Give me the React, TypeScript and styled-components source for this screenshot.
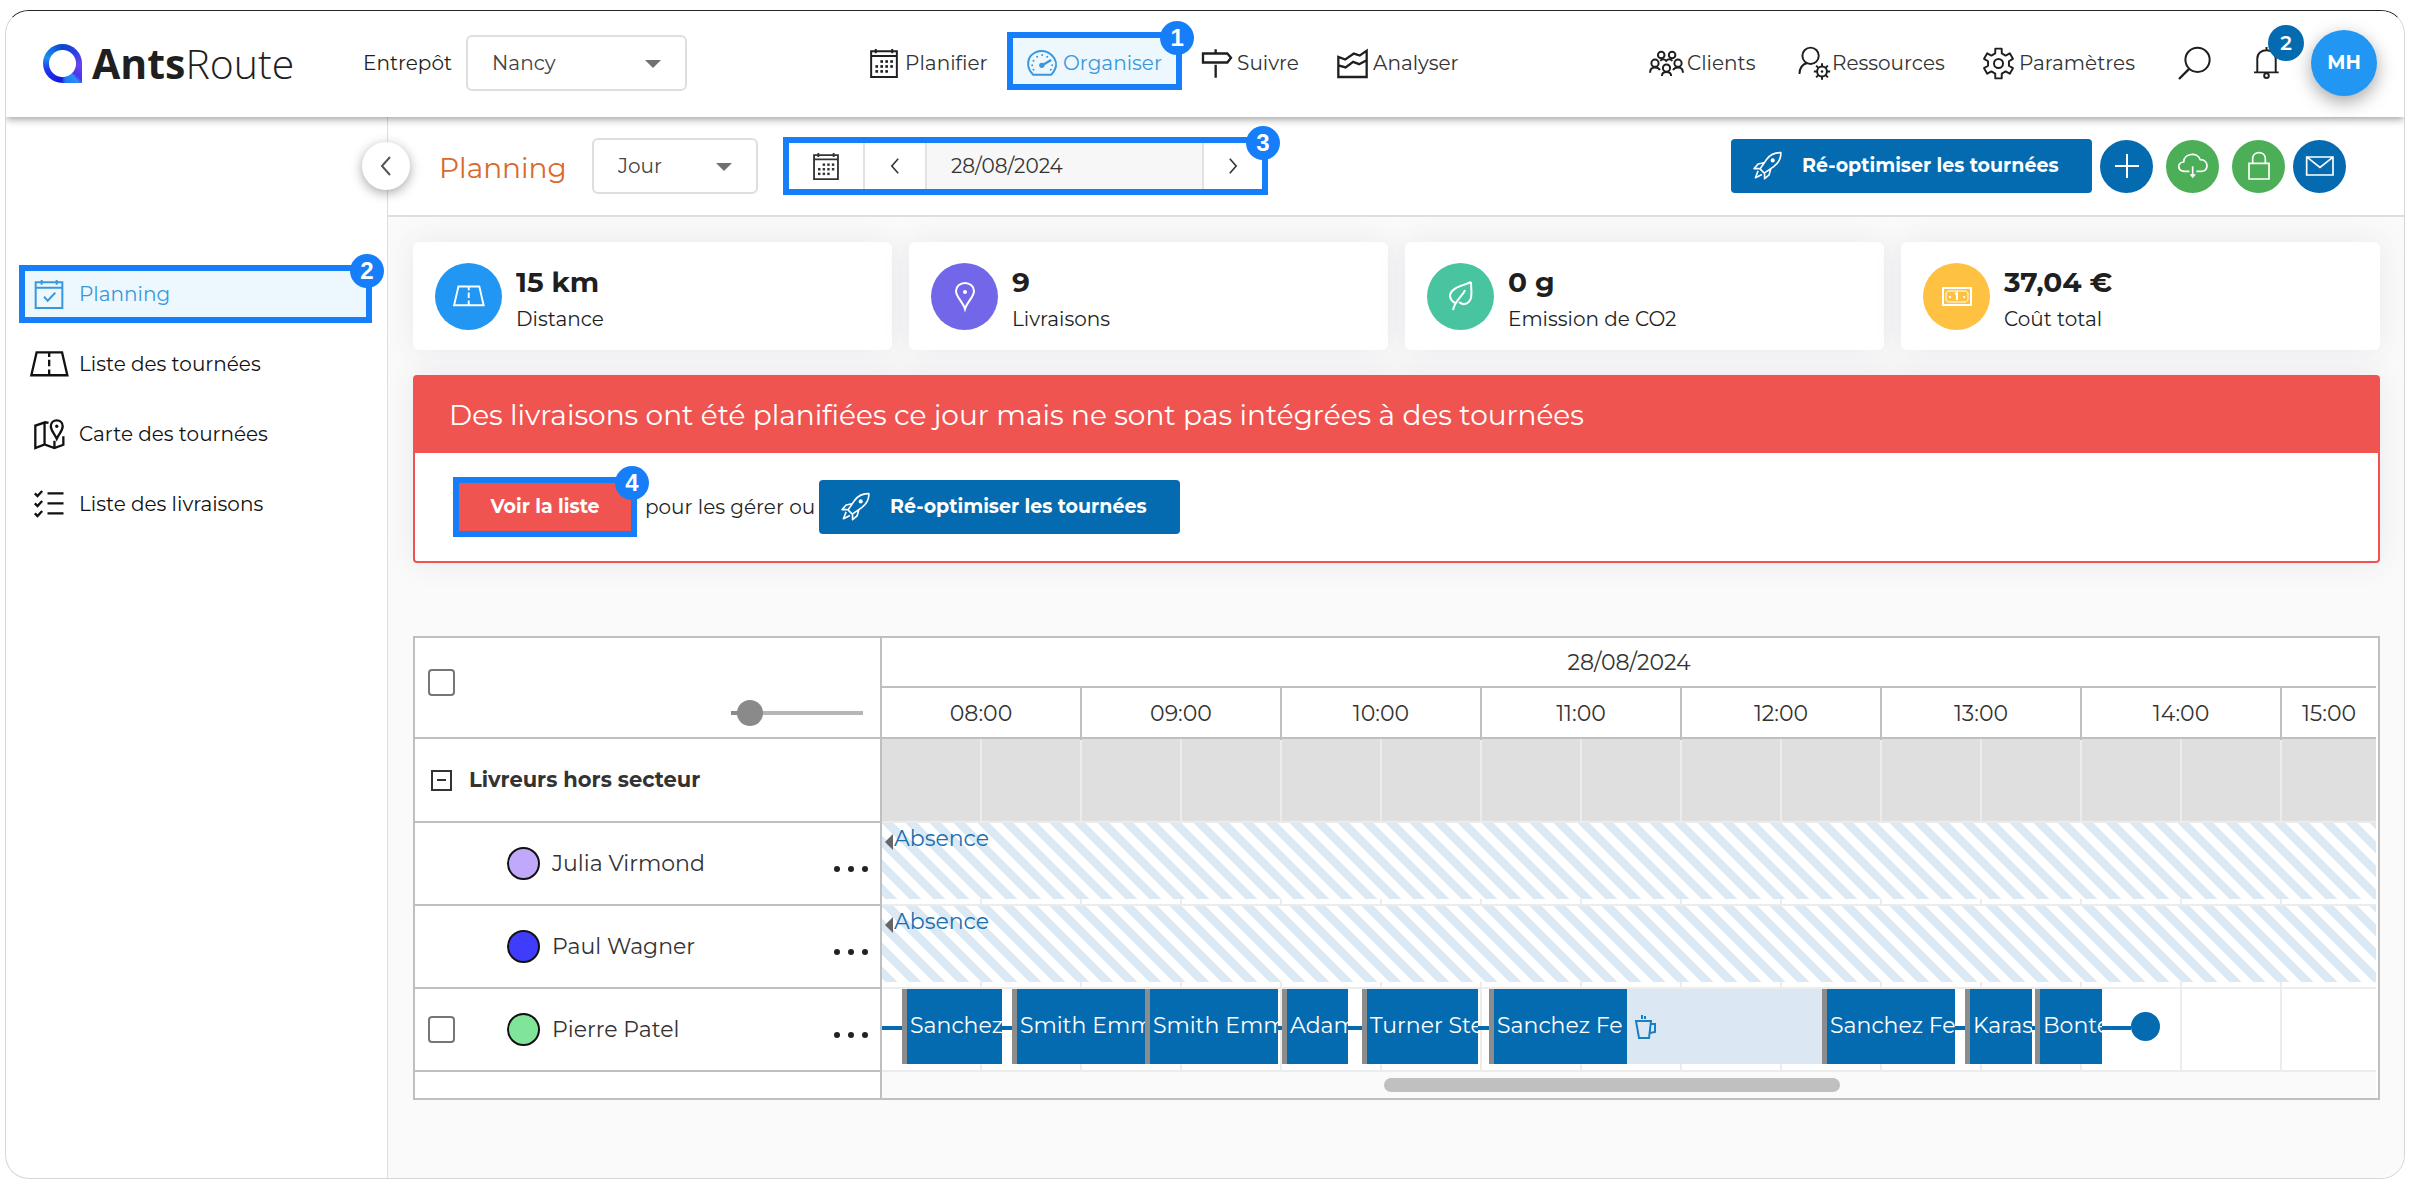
import React from "react";
import styled, { createGlobalStyle, css } from "styled-components";

const blue = "#056bb1";
const sky = "#2196f3";
const highlight = "#177ef9";
const green = "#4caf57";
const red = "#f05451";
const line = "#bfbfbf";
const ink = "#1f1f1f";
const font = `Montserrat, Inter, "Open Sans", sans-serif`;

const GlobalStyle = createGlobalStyle`
  *, *::before, *::after { box-sizing: border-box; }
  body { margin: 0; background: #fff; color: ${ink}; font: 400 20px/24px ${font}; }
  button, input, select { font: inherit; color: inherit; margin: 0; }
  button { border: 0; padding: 0; background: none; cursor: pointer; }
  h1, h2, p { margin: 0; font-weight: 400; }
  a { color: inherit; text-decoration: none; }
  svg { display: block; flex: none; overflow: visible; }
`;

/* ---------- shell ---------- */

const Frame = styled.div`
  display: flex;
  flex-direction: column;
  min-height: calc(100vh - 20px);
  margin: 10px 5px;
  border: 1px solid #d6d6d6;
  border-top-color: #26242a;
  border-radius: 24px;
  overflow: hidden;
`;

const Header = styled.header`
  display: flex;
  align-items: center;
  height: 106px;
  padding: 0 27px 2px 37px;
  background: #fff;
  box-shadow: 0 2px 8px rgba(0, 0, 0, 0.4);
  position: relative;
  z-index: 2;
`;

const Body = styled.div`
  display: flex;
  flex: 1;
`;

const Sidebar = styled.aside`
  width: 382px;
  flex: none;
  padding: 148px 15px 0 13px;
  border-right: 1px solid #dedede;
`;

const Main = styled.main`
  flex: 1;
  min-width: 0;
  display: flex;
  flex-direction: column;
  background: #fafafa;
`;

/* ---------- callouts ---------- */

const Callout = styled.div`
  position: relative;
  display: flex;
  border: 6px solid ${highlight};
`;

const CalloutNumber = styled.span`
  position: absolute;
  top: -17px;
  right: -18px;
  width: 34px;
  height: 34px;
  border-radius: 50%;
  background: ${highlight};
  color: #fff;
  font: 700 24px/34px "Liberation Sans", Arial, sans-serif;
  text-align: center;
  z-index: 1;
`;

/* ---------- header parts ---------- */

const Logo = styled.a`
  display: flex;
  align-items: center;
  gap: 10px;
  width: 320px;
  font: 300 41px/44px "Open Sans", sans-serif;

  strong { font-weight: 700; }
`;

const LogoMark = styled.span`
  width: 39px;
  height: 39px;
  border-radius: 20px 20px 0 20px;
  background:
    radial-gradient(circle, #fff 13px, transparent 14px),
    conic-gradient(#0b45cc, #2a3fe6 50deg, #6a45f0 95deg, #4a35ee 130deg, #2b8df5 140deg, #1f7af0 170deg, #1717dc 185deg, #2038ee 250deg, #1b8ff0 290deg, #0b45cc);
`;

const SelectLabel = styled.label`
  display: flex;
  align-items: center;
  gap: 14px;
  white-space: nowrap;
`;

const SelectBox = styled.span<{ $width: number }>`
  position: relative;
  display: flex;
  width: ${(p) => p.$width}px;

  &::after {
    content: "";
    position: absolute;
    right: 26px;
    top: 25px;
    border: 8px solid transparent;
    border-top-color: #707070;
    border-bottom: 0;
    pointer-events: none;
  }

  select {
    appearance: none;
    width: 100%;
    height: 56px;
    padding: 0 24px;
    border: 2px solid #dedede;
    border-radius: 6px;
    background: #fff;
    color: #444;
  }
`;

const MainNav = styled.nav`
  display: grid;
  grid-template-columns: 157px 175px 135px 130px;
  align-items: center;
  margin-left: 163px;
`;

const NavCallout = styled(Callout)`
  margin-bottom: 4px;
`;

const NavLink = styled.a<{ $active?: boolean; $gap?: number }>`
  display: flex;
  align-items: center;
  gap: ${(p) => p.$gap ?? 5}px;
  padding-left: 20px;
  white-space: nowrap;
  color: #333;

  svg { color: ${ink}; }

  ${(p) =>
    p.$active &&
    css`
      flex: 1;
      height: 46px;
      padding: 4px 0 0 14px;
      background: #edf7fe;
      color: #3a97dd;
      svg { color: #3a97dd; }
    `}
`;

const UserNav = styled.nav`
  display: grid;
  grid-template-columns: 149px 185px 195px 76px 57px 66px;
  align-items: center;
  margin-left: auto;

  ${NavLink} { padding-left: 0; }
`;

const IconButton = styled.button`
  position: relative;
  display: flex;
`;

const Notification = styled.span`
  position: absolute;
  left: 14px;
  top: -22px;
  width: 36px;
  height: 36px;
  border-radius: 50%;
  background: ${blue};
  color: #fff;
  font-weight: 600;
  line-height: 36px;
  text-align: center;
`;

const Avatar = styled.button`
  width: 66px;
  height: 66px;
  border-radius: 50%;
  background: ${sky};
  color: #fff;
  font-size: 19px;
  font-weight: 700;
  box-shadow: 0 6px 18px rgba(0, 0, 0, 0.35);
`;

/* ---------- sidebar parts ---------- */

const SideLinks = styled.nav`
  display: flex;
  flex-direction: column;
  gap: 12px;
`;

const SideLink = styled.a<{ $active?: boolean }>`
  display: grid;
  grid-template-columns: 60px 1fr;
  align-items: center;
  height: 58px;
  color: #111;

  svg { justify-self: center; }

  ${(p) =>
    p.$active &&
    css`
      flex: 1;
      height: 46px;
      grid-template-columns: 54px 1fr;
      background: #edf7fe;
      color: #3a97dd;
      svg { margin-right: 6px; }
    `}
`;

/* ---------- toolbar ---------- */

const Toolbar = styled.div`
  display: flex;
  align-items: center;
  height: 100px;
  padding-right: 58px;
  border-bottom: 2px solid #dedede;
  background: #fff;
`;

const Collapse = styled.button`
  display: grid;
  place-items: center;
  width: 48px;
  height: 48px;
  margin-left: -26px;
  border-radius: 50%;
  background: #fff;
  color: #555;
  box-shadow: 0 3px 12px rgba(0, 0, 0, 0.35);
`;

const Title = styled.h1`
  width: 153px;
  margin-left: 29px;
  padding-top: 4px;
  color: #d96a2c;
  font-size: 28px;
  line-height: 36px;
`;

const DatePicker = styled.div`
  display: grid;
  grid-template-columns: 74px 62px 277px 60px;
  height: 46px;
  width: 473px;

  > * + * { border-left: 2px solid #e2e2e2; }

  button {
    display: grid;
    place-items: center;
    background: #fff;
    color: #333;
  }

  input {
    min-width: 0;
    border: 0;
    border-left: 2px solid #e2e2e2;
    padding: 0 24px;
    background: #f7f7f7;
    color: #333;
  }
`;

const DateCallout = styled(Callout)`
  margin-left: 25px;
`;

const Actions = styled.div`
  display: flex;
  align-items: center;
  gap: 8px;
  margin-left: auto;
`;

const LockGroup = styled.div`
  display: flex;
  gap: 13px;
`;

const PrimaryButton = styled.button`
  display: flex;
  align-items: center;
  gap: 20px;
  width: 361px;
  height: 54px;
  padding-left: 22px;
  border-radius: 4px;
  background: ${blue};
  color: #fff;
  font-size: 19px;
  font-weight: 700;
  white-space: nowrap;
`;

const RoundButton = styled.button<{ $color: string }>`
  display: grid;
  place-items: center;
  width: 53px;
  height: 53px;
  border-radius: 50%;
  background: ${(p) => p.$color};
  color: #fff;
`;

/* ---------- content ---------- */

const Content = styled.div`
  display: flex;
  flex-direction: column;
  padding: 25px 24px 0 25px;
`;

const softShadow = "0 0 30px rgba(70, 70, 110, 0.09)";

const Stats = styled.div`
  display: grid;
  grid-template-columns: repeat(4, 1fr);
  gap: 17px;
`;

const Stat = styled.div`
  display: grid;
  grid-template-columns: 67px 1fr;
  align-items: center;
  gap: 14px;
  height: 108px;
  padding: 0 22px;
  border-radius: 6px;
  background: #fff;
  box-shadow: ${softShadow};
`;

const StatIcon = styled.span<{ $color: string }>`
  display: grid;
  place-items: center;
  width: 67px;
  height: 67px;
  border-radius: 50%;
  background: ${(p) => p.$color};
  color: #fff;
`;

const StatText = styled.div`
  display: flex;
  flex-direction: column;
  gap: 9px;
  padding-top: 4px;

  strong { font-weight: 700; font-size: 28px; line-height: 32px; }
`;

const Alert = styled.section`
  margin-top: 25px;
  border: 2px solid ${red};
  border-radius: 4px;
  background: #fff;
  box-shadow: ${softShadow};
`;

const AlertTitle = styled.h2`
  padding: 0 34px;
  background: ${red};
  color: #fff;
  font-size: 28px;
  line-height: 76px;
`;

const AlertBody = styled.div`
  display: flex;
  align-items: center;
  height: 108px;
  padding-left: 38px;

  p { width: 182px; padding-left: 8px; white-space: nowrap; }
`;

const DangerButton = styled.button`
  width: 172px;
  height: 48px;
  background: ${red};
  color: #fff;
  font-size: 19px;
  font-weight: 700;
`;

/* ---------- schedule ---------- */

const Schedule = styled.section`
  display: grid;
  grid-template-columns: 467px 1fr;
  margin-top: 73px;
  border: 2px solid ${line};
  background: #fff;
  color: #333;
  font-size: 22px;
`;

const Drivers = styled.div`
  border-right: 2px solid ${line};
`;

const DriversHead = styled.div`
  display: flex;
  justify-content: space-between;
  height: 101px;
  padding: 31px 17px 11px 13px;
  border-bottom: 2px solid ${line};
`;

const Checkbox = styled.input`
  appearance: none;
  width: 27px;
  height: 27px;
  border: 2px solid #767676;
  border-radius: 4px;
  background: #fff;
`;

const ZoomSlider = styled.input`
  appearance: none;
  align-self: flex-end;
  width: 132px;
  height: 26px;
  background: linear-gradient(90deg, #8a8a8a 20%, #b5b5b5 20%) center / 100% 4px no-repeat;

  &::-webkit-slider-thumb {
    appearance: none;
    width: 26px;
    height: 26px;
    border-radius: 50%;
    background: #8a8a8a;
  }
`;

const GroupRow = styled.div`
  display: flex;
  align-items: center;
  gap: 17px;
  height: 84px;
  padding-left: 16px;
  border-bottom: 2px solid ${line};
  font-size: 21px;
  font-weight: 700;
`;

const DriverRow = styled.div`
  display: grid;
  grid-template-columns: 79px 33px 1fr 34px;
  align-items: center;
  height: 83px;
  padding: 0 12px 0 13px;
  border-bottom: 2px solid ${line};

  label { padding-left: 12px; }
`;

const Swatch = styled.span<{ $color: string }>`
  width: 33px;
  height: 33px;
  border: 2px solid #111;
  border-radius: 50%;
  background: ${(p) => p.$color};
`;

const MoreButton = styled.button`
  display: flex;
  justify-content: space-between;
  padding-top: 10px;

  i { width: 6px; height: 6px; border-radius: 50%; background: #222; }
`;

const Timeline = styled.div`
  min-width: 0;
  overflow: hidden;
  padding-right: 2px;
`;

const DayHead = styled.div`
  height: 50px;
  border-bottom: 2px solid ${line};
  line-height: 50px;
  text-align: center;
`;

const Hours = styled.div`
  display: grid;
  grid-template-columns: repeat(7, 200px) 1fr;
  height: 51px;
  border-bottom: 2px solid ${line};
  line-height: 52px;
  text-align: center;

  span:not(:last-child) { border-right: 2px solid ${line}; }
`;

const Track = styled.div<{ $group?: boolean }>`
  display: flex;
  height: ${(p) => (p.$group ? 84 : 83)}px;
  border-bottom: 2px solid #ececec;
  background: repeating-linear-gradient(90deg, transparent 0 98px, #ececec 98px 100px)
    ${(p) => (p.$group ? "#dfdfdf" : "#fff")};
`;

const Absence = styled.div`
  display: flex;
  align-items: flex-start;
  gap: 1px;
  flex: 1;
  height: 76px;
  padding: 4px 3px;
  background: linear-gradient(45deg, #dbe9f4 25%, #fff 25% 50%, #dbe9f4 50% 75%, #fff 75%) 0 0 / 24px 24px;
  color: #1a6fae;
  line-height: 24px;

  &::before {
    content: "";
    margin-top: 7px;
    border: 8px solid transparent;
    border-right-color: #666;
    border-left: 0;
  }
`;

const Stop = styled.div<{ $width: number }>`
  flex: none;
  width: ${(p) => p.$width}px;
  height: 75px;
  padding-left: 3px;
  border-left: 5px solid #8c8c8c;
  background: ${blue};
  color: #fff;
  line-height: 73px;
  white-space: nowrap;
  overflow: hidden;
`;

const Pause = styled.div<{ $width: number }>`
  display: flex;
  align-items: center;
  flex: none;
  width: ${(p) => p.$width}px;
  height: 75px;
  padding-left: 8px;
  background: #dbe8f3;
  color: #1a7fc0;
`;

const Drive = styled.div<{ $width: number }>`
  flex: none;
  width: ${(p) => p.$width}px;
  height: 75px;
  background: linear-gradient(${blue}, ${blue}) center 37px / 100% 4px no-repeat;
`;

const Depot = styled.span`
  align-self: flex-start;
  width: 29px;
  height: 29px;
  margin-top: 23px;
  border-radius: 50%;
  background: ${blue};
`;

const ScrollTrack = styled.div`
  display: flex;
  height: 26px;
  padding: 6px 0 0 502px;
  background: #fafafa;
`;

const ScrollThumb = styled.div`
  width: 456px;
  height: 14px;
  border-radius: 7px;
  background: #c0c0c0;
`;

/* ---------- icons ---------- */

type IconProps = {
  box: string;
  w: number;
  h: number;
  stroke?: number;
  children: React.ReactNode;
};

const Icon = ({ box, w, h, stroke = 6, children }: IconProps) => (
  <svg viewBox={box} width={w} height={h} fill="none" stroke="currentColor" strokeWidth={stroke} aria-hidden="true">
    {children}
  </svg>
);

const gearPath = (cx: number, cy: number, outer: number, inner: number, teeth: number) => {
  const step = (Math.PI * 2) / teeth;
  const points: string[] = [];
  for (let i = 0; i < teeth; i++) {
    const mid = i * step - Math.PI / 2;
    [
      [-0.3, inner],
      [-0.2, outer],
      [0.2, outer],
      [0.3, inner],
    ].forEach(([t, r]) => {
      points.push(`${(cx + Math.cos(mid + t * step) * r).toFixed(1)} ${(cy + Math.sin(mid + t * step) * r).toFixed(1)}`);
    });
  }
  return `M${points.join("L")}Z`;
};

const CalendarIcon = ({ size = 28 }: { size?: number }) => (
  <Icon box="0 0 84 88" w={size} h={size + 1}>
    <path d="M3 7H81V85H3ZM3 21H81M17 0V13M67 0V13" />
    <g fill="currentColor" stroke="none">
      {[[35, 37], [50, 37], [65, 37], [20, 52], [35, 52], [50, 52], [65, 52], [20, 67], [35, 67], [50, 67]].map(([x, y]) => (
        <rect key={`${x}-${y}`} x={x - 4} y={y - 3} width="8" height="8" />
      ))}
    </g>
  </Icon>
);

const GaugeIcon = () => (
  <Icon box="500 77 92 78" w={31} h={26}>
    <path d="M518 151C496 130 498 96 525 84C562 68 600 105 582 138Q577 147 572 151Z" />
    <path d="M545 123L572 107" strokeWidth="7" />
    <circle cx="544" cy="123" r="8" fill="currentColor" stroke="none" />
    <g fill="currentColor" stroke="none">
      {[[519, 136], [515, 123], [519, 109], [530, 97], [545, 92], [560, 97], [575, 123], [571, 136]].map(([x, y]) => (
        <circle key={`${x}-${y}`} cx={x} cy={y} r="3" />
      ))}
    </g>
  </Icon>
);

const SignIcon = () => (
  <Icon box="1026 72 90 86" w={30} h={29} stroke={7}>
    <path d="M1029 85H1102L1113 98L1102 112H1029ZM1067 72V85M1067 119V158" />
  </Icon>
);

const ChartIcon = () => (
  <Icon box="1432 72 92 88" w={31} h={29} stroke={7}>
    <path d="M1435 96V157H1521V77L1500 92L1482 86L1456 104ZM1435 122L1457 128L1480 111L1498 118L1521 106" />
  </Icon>
);

const PeopleIcon = () => (
  <Icon box="27 92 106 76" w={35} h={25}>
    <circle cx="64" cy="104" r="10" />
    <circle cx="97" cy="104" r="10" />
    <circle cx="45" cy="129" r="11" />
    <circle cx="115" cy="129" r="11" />
    <circle cx="80" cy="144" r="11" />
    <path d="M30 158C30 147 37 142 45 142S58 146 60 150M130 158C130 147 123 142 115 142S102 146 100 150M66 168C66 159 72 156 80 156S94 159 94 168M61 122Q70 112 79 122Q88 112 98 122" />
  </Icon>
);

const PersonGearIcon = () => (
  <Icon box="473 86 100 104" w={33} h={34}>
    <circle cx="511" cy="116" r="25" />
    <path d="M477 172C477 155 485 142 501 138" />
    <circle cx="546" cy="164" r="15" />
    <path d="M546 139V149M546 179V189M521 164H531M561 164H571M528 146L535 153M557 175L564 182M564 146L557 153M535 175L528 182" />
    <circle cx="546" cy="164" r="4" fill="currentColor" stroke="none" />
  </Icon>
);

const GearIcon = () => (
  <Icon box="1027 80 96 100" w={31} h={33}>
    <path d={gearPath(1075, 130, 47, 33, 6)} strokeLinejoin="round" />
    <circle cx="1075" cy="130" r="14" />
  </Icon>
);

const SearchIcon = () => (
  <Icon box="563 86 98 98" w={33} h={33}>
    <circle cx="621" cy="124" r="36" />
    <path d="M596 151L566 181" strokeWidth="7" />
  </Icon>
);

const BellIcon = () => (
  <Icon box="792 87 76 97" w={25} h={32}>
    <path d="M792 164H867M802 164V122C802 88 858 88 858 122V164M830 87V97" />
    <circle cx="830" cy="174" r="7" />
  </Icon>
);

const RocketIcon = () => (
  <Icon box="337 401 88 86" w={29} h={28} stroke={5}>
    <path d="M422 403C400 402 388 410 378 424L358 453L371 466L400 446C416 434 423 422 422 403ZM370 434L352 438L340 452H356M391 453L386 471L372 483V468M352 459L344 480L364 470" strokeLinejoin="round" />
    <circle cx="397" cy="427" r="4" fill="currentColor" />
  </Icon>
);

const CloudIcon = () => (
  <Icon box="563 404 90 78" w={30} h={26} stroke={5}>
    <path d="M597 459H583C560 459 560 431 580 431C581 404 622 400 630 424C656 424 656 459 634 459H618M607 444V474" />
    <path d="M598 468H617L607 480Z" fill="currentColor" stroke="none" />
  </Icon>
);

const LockIcon = () => (
  <Icon box="772 396 66 84" w={22} h={28} stroke={5}>
    <path d="M775 430H835V477H775ZM786 430V416C786 392 824 392 824 416V430" />
  </Icon>
);

const MailIcon = () => (
  <Icon box="948 410 84 60" w={28} h={20} stroke={5}>
    <path d="M950 413H1029V467H950ZM952 414L990 444L1028 414" />
  </Icon>
);

const Chevron = ({ right, h }: { right?: boolean; h: number }) => (
  <Icon box="0 0 10 20" w={h / 2} h={h} stroke={2}>
    <path d={right ? "M1 1L9 10L1 19" : "M9 1L1 10L9 19"} />
  </Icon>
);

const CheckCalendarIcon = () => (
  <Icon box="78 748 84 87" w={28} h={29}>
    <path d="M80 755H160V832H80ZM80 771H160M98 748V762M143 748V762M105 798L116 810L139 786" />
  </Icon>
);

const RoadIcon = ({ w, h, stroke }: { w: number; h: number; stroke: number }) => (
  <Icon box="62 962 118 78" w={w} h={h} stroke={stroke}>
    <path d="M82 966H159L175 1035H66ZM120 966V980M120 988V1008M120 1018V1035" />
  </Icon>
);

const MapIcon = () => (
  <Icon box="75 1160 92 94" w={31} h={31} stroke={7}>
    <path d="M118 1172L108 1170L78 1180V1248L106 1237L136 1248L163 1238V1212M106 1171V1237M136 1248V1226" />
    <path d="M143 1220C136 1204 125 1196 125 1182C125 1158 161 1158 161 1182C161 1196 150 1204 143 1220Z" />
    <circle cx="143" cy="1182" r="5" fill="currentColor" stroke="none" />
  </Icon>
);

const ChecklistIcon = () => (
  <Icon box="77 1380 89 84" w={30} h={28} stroke={7}>
    <path d="M117 1390H165M117 1420H165M117 1450H165M79 1390L87 1398L101 1383M79 1420L87 1428L101 1413M79 1450L87 1458L101 1443" />
  </Icon>
);

const PinIcon = () => (
  <Icon box="0 0 20 28" w={20} h={28} stroke={2}>
    <path d="M10 27C8 20 1 15 1 9A9 8 0 0 1 19 9C19 15 12 20 10 27Z" />
    <circle cx="10" cy="10" r="2" fill="currentColor" stroke="none" />
  </Icon>
);

const LeafIcon = () => (
  <Icon box="0 0 24 30" w={24} h={30} stroke={2}>
    <path d="M22 1C14 5 3 6 1 14C1 19 4 21 6 22M10 21C14 25 20 23 22 17C23 12 22 6 22 1M16 9C14 15 6 19 4 29" />
  </Icon>
);

const MoneyIcon = () => (
  <Icon box="0 0 30 19" w={30} h={19} stroke={2}>
    <path d="M1 1H29V18H1Z" />
    <path d="M6 4H24L26 6V13L24 15H6L4 13V6Z" strokeWidth="1" />
    <path d="M13 7L15 6V13" />
    <path d="M8 9V11M22 9V11" />
  </Icon>
);

const CupIcon = () => (
  <Icon box="0 0 22 24" w={22} h={24} stroke={2}>
    <path d="M1 6H16L14 23H4ZM16 9H20V17L15 18M7 0V4M10 1V4" />
  </Icon>
);

/* ---------- data ---------- */

const stats = [
  { value: "15 km", label: "Distance", color: sky, icon: <RoadIcon w={32} h={22} stroke={7} /> },
  { value: "9", label: "Livraisons", color: "#7367e9", icon: <PinIcon /> },
  { value: "0 g", label: "Emission de CO2", color: "#49c4a0", icon: <LeafIcon /> },
  { value: "37,04 €", label: "Coût total", color: "#fec142", icon: <MoneyIcon /> },
];

const drivers = [
  { name: "Julia Virmond", color: "#c0a8fb", selectable: false },
  { name: "Paul Wagner", color: "#403cfb", selectable: false },
  { name: "Pierre Patel", color: "#80e59b", selectable: true },
];

const hours = ["08:00", "09:00", "10:00", "11:00", "12:00", "13:00", "14:00", "15:00"];

type Step = { kind: "drive" | "stop" | "pause"; width: number; name?: string };

const route: Step[] = [
  { kind: "drive", width: 20 },
  { kind: "stop", width: 100, name: "Sanchez" },
  { kind: "drive", width: 10 },
  { kind: "stop", width: 133, name: "Smith Emm" },
  { kind: "stop", width: 133, name: "Smith Emm" },
  { kind: "drive", width: 4 },
  { kind: "stop", width: 66, name: "Adam" },
  { kind: "drive", width: 14 },
  { kind: "stop", width: 116, name: "Turner Ste" },
  { kind: "drive", width: 11 },
  { kind: "stop", width: 138, name: "Sanchez Fe" },
  { kind: "pause", width: 195 },
  { kind: "stop", width: 133, name: "Sanchez Fe" },
  { kind: "drive", width: 10 },
  { kind: "stop", width: 67, name: "Karas" },
  { kind: "drive", width: 3 },
  { kind: "stop", width: 67, name: "Bonte" },
  { kind: "drive", width: 29 },
];

const RouteStep = ({ step }: { step: Step }) => {
  if (step.kind === "stop") return <Stop $width={step.width}>{step.name}</Stop>;
  if (step.kind === "pause")
    return (
      <Pause $width={step.width}>
        <CupIcon />
      </Pause>
    );
  return <Drive $width={step.width} />;
};

const Reoptimise = () => (
  <PrimaryButton type="button">
    <RocketIcon />
    Ré-optimiser les tournées
  </PrimaryButton>
);

export default function App() {
  return (
    <>
      <GlobalStyle />
      <Frame>
        <Header>
          <Logo href="#">
            <LogoMark />
            <span>
              <strong>Ants</strong>Route
            </span>
          </Logo>
          <SelectLabel>
            Entrepôt
            <SelectBox $width={221}>
              <select>
                <option>Nancy</option>
              </select>
            </SelectBox>
          </SelectLabel>
          <MainNav>
            <NavLink href="#" $gap={7}>
              <CalendarIcon />
              Planifier
            </NavLink>
            <NavCallout>
              <NavLink href="#" $active>
                <GaugeIcon />
                Organiser
              </NavLink>
              <CalloutNumber>1</CalloutNumber>
            </NavCallout>
            <NavLink href="#">
              <SignIcon />
              Suivre
            </NavLink>
            <NavLink href="#">
              <ChartIcon />
              Analyser
            </NavLink>
          </MainNav>
          <UserNav>
            <NavLink href="#" $gap={3}>
              <PeopleIcon />
              Clients
            </NavLink>
            <NavLink href="#" $gap={1}>
              <PersonGearIcon />
              Ressources
            </NavLink>
            <NavLink href="#">
              <GearIcon />
              Paramètres
            </NavLink>
            <IconButton type="button" aria-label="Rechercher">
              <SearchIcon />
            </IconButton>
            <IconButton type="button" aria-label="Notifications">
              <BellIcon />
              <Notification>2</Notification>
            </IconButton>
            <Avatar type="button">MH</Avatar>
          </UserNav>
        </Header>

        <Body>
          <Sidebar>
            <SideLinks>
              <Callout>
                <SideLink href="#" $active>
                  <CheckCalendarIcon />
                  Planning
                </SideLink>
                <CalloutNumber>2</CalloutNumber>
              </Callout>
              <SideLink href="#">
                <RoadIcon w={39} h={26} stroke={7} />
                Liste des tournées
              </SideLink>
              <SideLink href="#">
                <MapIcon />
                Carte des tournées
              </SideLink>
              <SideLink href="#">
                <ChecklistIcon />
                Liste des livraisons
              </SideLink>
            </SideLinks>
          </Sidebar>

          <Main>
            <Toolbar>
              <Collapse type="button" aria-label="Réduire le menu">
                <Chevron h={20} />
              </Collapse>
              <Title>Planning</Title>
              <SelectBox $width={166}>
                <select aria-label="Période">
                  <option>Jour</option>
                </select>
              </SelectBox>
              <DateCallout>
                <DatePicker>
                  <button type="button" aria-label="Calendrier">
                    <CalendarIcon size={26} />
                  </button>
                  <button type="button" aria-label="Jour précédent">
                    <Chevron h={16} />
                  </button>
                  <input type="text" aria-label="Date" defaultValue="28/08/2024" />
                  <button type="button" aria-label="Jour suivant">
                    <Chevron right h={16} />
                  </button>
                </DatePicker>
                <CalloutNumber>3</CalloutNumber>
              </DateCallout>
              <Actions>
                <Reoptimise />
                <LockGroup>
                  <RoundButton type="button" $color={blue} aria-label="Ajouter">
                    <Icon box="0 0 24 24" w={24} h={24} stroke={2}>
                      <path d="M12 0V24M0 12H24" />
                    </Icon>
                  </RoundButton>
                  <RoundButton type="button" $color={green} aria-label="Télécharger">
                    <CloudIcon />
                  </RoundButton>
                  <RoundButton type="button" $color={green} aria-label="Verrouiller">
                    <LockIcon />
                  </RoundButton>
                </LockGroup>
                <RoundButton type="button" $color={blue} aria-label="Envoyer">
                  <MailIcon />
                </RoundButton>
              </Actions>
            </Toolbar>

            <Content>
              <Stats>
                {stats.map((s) => (
                  <Stat key={s.label}>
                    <StatIcon $color={s.color}>{s.icon}</StatIcon>
                    <StatText>
                      <strong>{s.value}</strong>
                      <span>{s.label}</span>
                    </StatText>
                  </Stat>
                ))}
              </Stats>

              <Alert>
                <AlertTitle>Des livraisons ont été planifiées ce jour mais ne sont pas intégrées à des tournées</AlertTitle>
                <AlertBody>
                  <Callout>
                    <DangerButton type="button">Voir la liste</DangerButton>
                    <CalloutNumber>4</CalloutNumber>
                  </Callout>
                  <p>pour les gérer ou</p>
                  <Reoptimise />
                </AlertBody>
              </Alert>

              <Schedule>
                <Drivers>
                  <DriversHead>
                    <Checkbox type="checkbox" aria-label="Tout sélectionner" />
                    <ZoomSlider type="range" min="0" max="100" defaultValue="6" aria-label="Zoom" />
                  </DriversHead>
                  <GroupRow>
                    <IconButton type="button" aria-label="Replier le groupe">
                      <Icon box="0 0 21 21" w={21} h={21} stroke={2}>
                        <path d="M1 1H20V20H1ZM6 10H15" />
                      </Icon>
                    </IconButton>
                    Livreurs hors secteur
                  </GroupRow>
                  {drivers.map((d) => (
                    <DriverRow key={d.name}>
                      {d.selectable ? <Checkbox type="checkbox" id="driver-check" /> : <span />}
                      <Swatch $color={d.color} />
                      {d.selectable ? <label htmlFor="driver-check">{d.name}</label> : <label>{d.name}</label>}
                      <MoreButton type="button" aria-label={`Options ${d.name}`}>
                        <i />
                        <i />
                        <i />
                      </MoreButton>
                    </DriverRow>
                  ))}
                </Drivers>
                <Timeline>
                  <DayHead>28/08/2024</DayHead>
                  <Hours>
                    {hours.map((h) => (
                      <span key={h}>{h}</span>
                    ))}
                  </Hours>
                  <Track $group />
                  <Track>
                    <Absence>Absence</Absence>
                  </Track>
                  <Track>
                    <Absence>Absence</Absence>
                  </Track>
                  <Track>
                    {route.map((step, i) => (
                      <RouteStep key={i} step={step} />
                    ))}
                    <Depot />
                  </Track>
                  <ScrollTrack>
                    <ScrollThumb />
                  </ScrollTrack>
                </Timeline>
              </Schedule>
            </Content>
          </Main>
        </Body>
      </Frame>
    </>
  );
}
